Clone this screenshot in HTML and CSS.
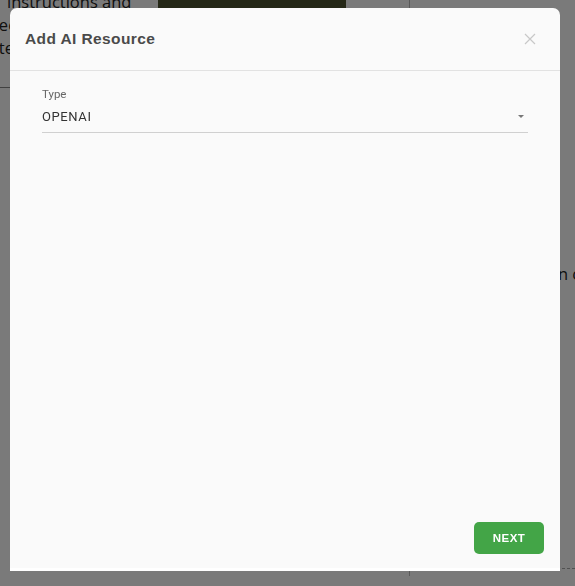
FILE: index.html
```html
<!DOCTYPE html>
<html lang="en">

<head>
    <meta charset="UTF-8">
    <meta name="viewport" content="width=device-width, initial-scale=1.0">
    <title>Add AI Resource</title>
    <link rel="stylesheet" href="styles.css">
</head>

<body>
    <!-- page behind the dialog -->
    <div class="page">
        <div class="page-left">
            <p class="page-text top">instructions and</p>
            <p class="page-text">sec</p>
            <p class="page-text">ste</p>
            <hr class="page-rule">
        </div>
        <div class="page-media"></div>
        <div class="page-side">
            <p class="page-text side-text">on c</p>
        </div>
        <div class="page-foot"></div>
    </div>

    <div class="overlay"></div>

    <!-- Add AI Resource dialog -->
    <div class="modal">
        <div class="modal-header">
            <h2>Add AI Resource</h2>
            <button class="close" aria-label="Close">
                <svg width="12" height="12" viewBox="0 0 12 12">
                    <path d="M1 1L11 11M11 1L1 11" stroke="#c8c8c8" stroke-width="1.2" fill="none" />
                </svg>
            </button>
        </div>
        <div class="modal-body">
            <label class="field-label" for="type">Type</label>
            <div class="select">
                <span id="type">OPENAI</span>
                <span class="caret"></span>
            </div>
        </div>
        <div class="modal-footer">
            <button class="next">NEXT</button>
        </div>
    </div>
</body>

</html>
```

FILE: styles.css
```css
body {
    margin: 0;
    width: 575px;
    height: 586px;
    overflow: hidden;
    font-family: "Liberation Sans", Arial, sans-serif;
    background-color: #fff;
}

.page {
    position: relative;
    height: 586px;
}

.page-left {
    width: 150px;
    margin-top: -10px;
}

.page-text {
    margin: 0;
    font-family: "Open Sans", sans-serif;
    font-size: 16.5px;
    line-height: 23px;
    color: #222;
    padding-left: 7px;
    white-space: nowrap;
}

.page-left .page-text:not(.top) {
    margin-left: -16px;
}

.page-rule {
    border: none;
    border-top: 1px solid #888;
    margin: 28px 0 0;
}

.page-media {
    position: absolute;
    left: 158px;
    top: 0;
    width: 188px;
    height: 40px;
    background-color: #4e5531;
}

.page-side {
    position: absolute;
    left: 409px;
    top: 0;
    bottom: 0;
    right: 0;
    border-left: 1px solid #bbb;
}

.side-text {
    position: absolute;
    top: 272px;
    left: 131px;
}

.page-foot {
    position: absolute;
    left: 447px;
    right: 0;
    top: 578px;
    border-top: 1px dashed #aaa;
}

.overlay {
    position: fixed;
    inset: 0;
    background-color: rgba(0, 0, 0, 0.52);
}

.modal {
    position: fixed;
    left: 10px;
    top: 8px;
    width: 550px;
    height: 560px;
    display: flex;
    flex-direction: column;
    background-color: #fafafa;
    border-radius: 7px 7px 0 0;
    border-bottom: 3px solid #fff;
}

.modal-header {
    display: flex;
    align-items: center;
    justify-content: space-between;
    height: 62px;
    padding: 0 24px 0 15px;
    border-bottom: 1px solid #e2e2e2;
}

.modal-header h2 {
    margin: 0;
    font-size: 15.5px;
    font-weight: bold;
    color: #4a4a4a;
    letter-spacing: 0.4px;
}

.close {
    border: none;
    background: none;
    padding: 0;
    width: 12px;
    height: 12px;
    cursor: pointer;
}

.modal-body {
    flex: 1;
    padding: 16px 32px 0 32px;
}

.field-label {
    display: block;
    font-family: Roboto, sans-serif;
    font-size: 11.5px;
    color: #666;
    margin-bottom: 7px;
}

.select {
    display: flex;
    align-items: center;
    justify-content: space-between;
    padding: 1px 0 8px;
    border-bottom: 1px solid #d0d0d0;
    font-family: Roboto, sans-serif;
    font-size: 13px;
    letter-spacing: 0.6px;
    color: #333;
}

.caret {
    width: 0;
    height: 0;
    margin-right: 4px;
    border-left: 3px solid transparent;
    border-right: 3px solid transparent;
    border-top: 3px solid #777;
}

.modal-footer {
    display: flex;
    justify-content: flex-end;
    padding: 0 16px 14px;
}

.next {
    width: 70px;
    height: 32px;
    border: none;
    border-radius: 5px;
    background-color: #43a547;
    color: #fff;
    font-family: "Liberation Sans", Arial, sans-serif;
    font-size: 11.5px;
    font-weight: bold;
    letter-spacing: 0.5px;
    cursor: pointer;
}
```
